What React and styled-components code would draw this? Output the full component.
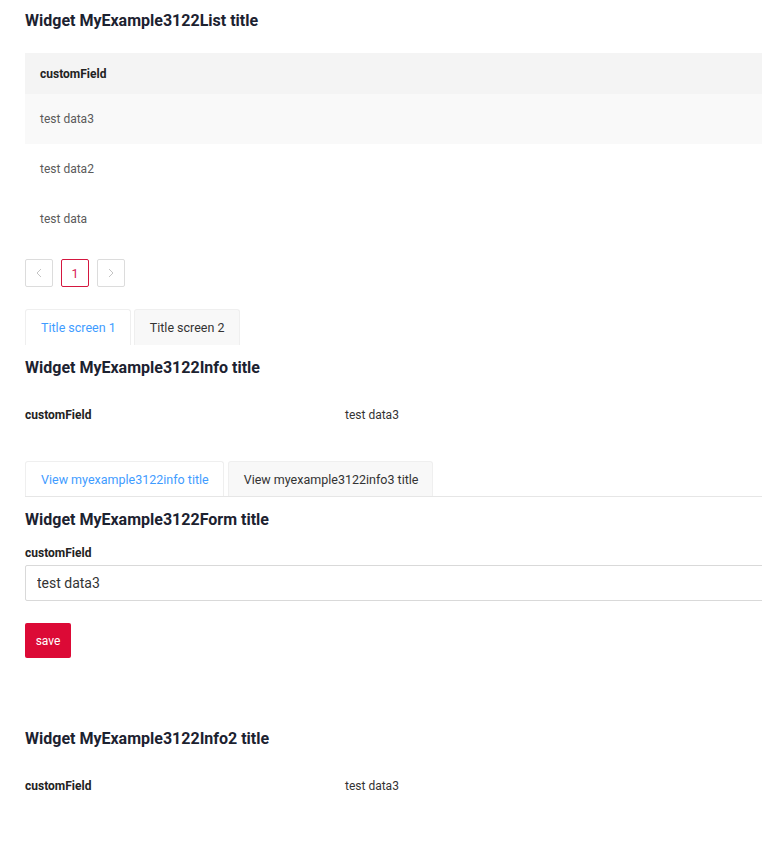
import React, { useState } from 'react';
import styled, { createGlobalStyle } from 'styled-components';

const GlobalStyle = createGlobalStyle`
  html, body {
    margin: 0;
    padding: 0;
    background: #fff;
    overflow-x: hidden;
  }
  body {
    font-family: Roboto, 'Liberation Sans', Arial, sans-serif;
    color: #333;
  }
`;

const Page = styled.div`
  padding: 11px 0 40px 25px;
  width: 800px;
`;

const WidgetTitle = styled.h3`
  margin: ${(p) => p.$top || 0}px 0 0;
  font-size: 16px;
  line-height: 20px;
  font-weight: 700;
  color: #1c2230;
`;

const Table = styled.div`
  margin-top: 22px;
  font-size: 12px;
`;

const HeadRow = styled.div`
  height: 41px;
  display: flex;
  align-items: center;
  padding-left: 15px;
  background: #f4f4f4;
  font-weight: 700;
  color: #222;
`;

const BodyRow = styled.div`
  height: 50px;
  display: flex;
  align-items: center;
  padding-left: 15px;
  background: ${(p) => (p.$striped ? '#f9f9f9' : '#fff')};
  color: #5a5a5a;
`;

const Pager = styled.div`
  display: flex;
  gap: 8px;
  margin-top: 15px;
`;

const PageBox = styled.button`
  width: 28px;
  height: 28px;
  box-sizing: border-box;
  padding: 0;
  display: flex;
  align-items: center;
  justify-content: center;
  background: #fff;
  border: 1px solid ${(p) => (p.$active ? '#d4173f' : '#dcdcdc')};
  border-radius: 2px;
  font-family: Roboto, 'Liberation Sans', Arial, sans-serif;
  font-size: 12.5px;
  color: #d81b56;
  cursor: pointer;
`;

const TabBar = styled.div`
  display: flex;
  gap: ${(p) => p.$gap}px;
  margin-top: ${(p) => p.$top}px;
  border-bottom: ${(p) => (p.$line ? '1px solid #e6e6e6' : 'none')};
`;

const Tab = styled.div`
  height: ${(p) => p.$h}px;
  box-sizing: border-box;
  padding: 0 14px 0 15px;
  display: flex;
  align-items: center;
  font-size: 12.5px;
  border: 1px solid #efefef;
  border-bottom: none;
  border-radius: 3px 3px 0 0;
  background: ${(p) => (p.$active ? '#fff' : '#f8f8f8')};
  color: ${(p) => (p.$active ? '#3f9cff' : '#333')};
  cursor: pointer;
  margin-bottom: ${(p) => (p.$active && p.$line ? '-1px' : '0')};
`;

const InfoRow = styled.div`
  display: grid;
  grid-template-columns: 320px 1fr;
  margin-top: 27px;
  font-size: 12px;
  line-height: 20px;
`;

const InfoLabel = styled.div`
  font-weight: 700;
  color: #222;
`;

const InfoValue = styled.div`
  color: #333;
`;

const Form = styled.form`
  display: flex;
  flex-direction: column;
  margin-top: 16px;
`;

const Label = styled.label`
  font-size: 12px;
  line-height: 14px;
  font-weight: 700;
  color: #222;
`;

const Input = styled.input`
  margin-top: 5px;
  height: 36px;
  box-sizing: border-box;
  padding: 0 11px;
  border: 1px solid #d9d9d9;
  border-radius: 2px;
  font-family: Roboto, 'Liberation Sans', Arial, sans-serif;
  font-size: 14px;
  color: #333;
  outline: none;
`;

const SaveButton = styled.button`
  align-self: flex-start;
  margin-top: 22px;
  width: 46px;
  height: 35px;
  border: none;
  border-radius: 2px;
  background: #dc0a36;
  color: #fff;
  font-family: Roboto, 'Liberation Sans', Arial, sans-serif;
  font-size: 12px;
  cursor: pointer;
`;

const Chevron = ({ dir }) => (
  <svg width="8" height="10" viewBox="0 0 8 10" fill="none">
    <polyline
      points={dir === 'left' ? '6,1 2,5 6,9' : '2,1 6,5 2,9'}
      stroke="#c4c4c4"
      strokeWidth="1"
    />
  </svg>
);

const rows = ['test data3', 'test data2', 'test data'];

export default function App() {
  const [screen, setScreen] = useState(0);
  const [view, setView] = useState(0);
  const [value, setValue] = useState('test data3');

  return (
    <>
      <GlobalStyle />
      <Page>
        <WidgetTitle>Widget MyExample3122List title</WidgetTitle>
        <Table>
          <HeadRow>customField</HeadRow>
          {rows.map((r, i) => (
            <BodyRow key={r} $striped={i === 0}>{r}</BodyRow>
          ))}
        </Table>
        <Pager>
          <PageBox><Chevron dir="left" /></PageBox>
          <PageBox $active>1</PageBox>
          <PageBox><Chevron dir="right" /></PageBox>
        </Pager>

        <TabBar $top={22} $gap={3}>
          {['Title screen 1', 'Title screen 2'].map((t, i) => (
            <Tab key={t} $h={36} $active={screen === i} onClick={() => setScreen(i)}>{t}</Tab>
          ))}
        </TabBar>

        <WidgetTitle $top={13}>Widget MyExample3122Info title</WidgetTitle>
        <InfoRow>
          <InfoLabel>customField</InfoLabel>
          <InfoValue>test data3</InfoValue>
        </InfoRow>

        <TabBar $top={36} $gap={4} $line>
          {['View myexample3122info title', 'View myexample3122info3 title'].map((t, i) => (
            <Tab key={t} $h={35} $line $active={view === i} onClick={() => setView(i)}>{t}</Tab>
          ))}
        </TabBar>

        <WidgetTitle $top={13}>Widget MyExample3122Form title</WidgetTitle>
        <Form onSubmit={(e) => e.preventDefault()}>
          <Label htmlFor="customField">customField</Label>
          <Input id="customField" value={value} onChange={(e) => setValue(e.target.value)} />
          <SaveButton type="submit">save</SaveButton>
        </Form>

        <WidgetTitle $top={71}>Widget MyExample3122Info2 title</WidgetTitle>
        <InfoRow>
          <InfoLabel>customField</InfoLabel>
          <InfoValue>test data3</InfoValue>
        </InfoRow>
      </Page>
    </>
  );
}
